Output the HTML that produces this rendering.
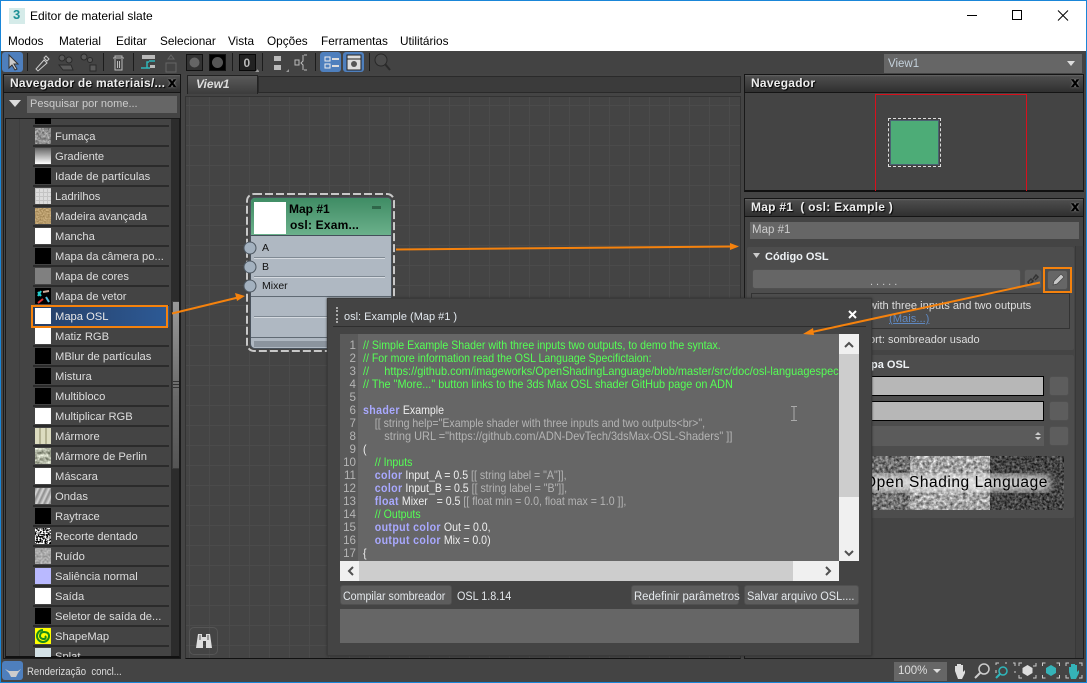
<!DOCTYPE html>
<html><head><meta charset="utf-8"><style>
*{box-sizing:border-box}
html,body{margin:0;padding:0;width:1087px;height:683px;overflow:hidden;background:#444}
body{position:relative;font-family:"Liberation Sans",sans-serif;font-size:12px;color:#ddd}
.a,.t,.r,.s{position:absolute}
.t{white-space:pre;line-height:14px}
.m{top:34px;color:#000;font-size:11.8px}
.r{left:33px;width:136px;height:21px;border-bottom:2px solid #2b2b2b}
.r b{position:absolute;left:22px;top:4px;font-weight:400;white-space:pre;font-size:11.2px;line-height:15px;color:#ddd}
.s{left:2px;top:2px;width:16px;height:16px;background:#fff;overflow:hidden}
.s svg{display:block}
.k{background:#000}
.hd{position:absolute;background:linear-gradient(#666 0,#4c4c4c 10%,#303030 100%);border:1px solid #151515}
.hd b{position:absolute;left:6px;top:1px;font-size:12px;line-height:15px;letter-spacing:.25px;white-space:pre;color:#eee;text-shadow:1px 1px 1px #000}
.hd i{position:absolute;right:4px;top:0;font:bold 14px/15px "Liberation Sans",sans-serif;color:#000;-webkit-text-stroke:.6px #000;text-shadow:0 0 2px #ddd}
.btn{position:absolute;background:#5d5d5d;border-radius:3px;border:1px solid #505050}
.code{position:absolute;left:363px;white-space:pre;font-size:11.6px;line-height:13px;color:#eee;transform:scaleX(.913);transform-origin:0 0}
.c{color:#55ff55}.w{color:#a9a9ff;font-weight:700;letter-spacing:.4px}.g{color:#b4b4b4}
.n{position:absolute;left:340px;width:16px;text-align:right;font-size:11.6px;line-height:13px;color:#b5b5b5}
.bt{font-size:11.5px;color:#e4e8ec;transform-origin:0 0}
</style></head><body>
<svg width="0" height="0" style="position:absolute"><defs>
<filter id="fBW" x="0" y="0" width="100%" height="100%" color-interpolation-filters="sRGB"><feTurbulence type="fractalNoise" baseFrequency=".6" numOctaves="1" seed="3"/><feColorMatrix values="9 0 0 0 -4 9 0 0 0 -4 9 0 0 0 -4 0 0 0 0 1"/></filter>
<filter id="fG" x="0" y="0" width="100%" height="100%" color-interpolation-filters="sRGB"><feTurbulence type="fractalNoise" baseFrequency=".4" numOctaves="2" seed="7"/><feColorMatrix values=".8 0 0 0 .17 .8 0 0 0 .17 .8 0 0 0 .17 0 0 0 0 1"/></filter>
<filter id="fR" x="0" y="0" width="100%" height="100%" color-interpolation-filters="sRGB"><feTurbulence type="fractalNoise" baseFrequency=".5" numOctaves="2" seed="9"/><feColorMatrix values=".4 0 0 0 .46 .4 0 0 0 .46 .4 0 0 0 .46 0 0 0 0 1"/></filter>
<filter id="fS" x="0" y="0" width="100%" height="100%" color-interpolation-filters="sRGB"><feTurbulence type="fractalNoise" baseFrequency=".6" numOctaves="2" seed="2"/><feColorMatrix values=".4 0 0 0 .52 .4 0 0 0 .41 .4 0 0 0 .22 0 0 0 0 1"/></filter>
<filter id="fP" x="0" y="0" width="100%" height="100%" color-interpolation-filters="sRGB"><feTurbulence type="fractalNoise" baseFrequency=".3" numOctaves="2" seed="5"/><feColorMatrix values=".9 0 0 0 .25 .9 0 0 0 .27 .9 0 0 0 .2 0 0 0 0 1"/></filter>
<filter id="fL" x="0" y="0" width="100%" height="100%" color-interpolation-filters="sRGB"><feTurbulence type="fractalNoise" baseFrequency=".35" numOctaves="3" seed="4"/><feColorMatrix values=".9 0 0 0 0 .9 0 0 0 0 .9 0 0 0 0 0 0 0 0 1"/></filter>
<filter id="fM" x="0" y="0" width="100%" height="100%" color-interpolation-filters="sRGB"><feTurbulence type="fractalNoise" baseFrequency=".3" numOctaves="3" seed="8"/><feColorMatrix values="1 0 0 0 .15 1 0 0 0 .15 1 0 0 0 .15 0 0 0 0 1"/></filter>
<filter id="fD" x="0" y="0" width="100%" height="100%" color-interpolation-filters="sRGB"><feTurbulence type="fractalNoise" baseFrequency=".4" numOctaves="3" seed="6"/><feColorMatrix values=".7 0 0 0 -.08 .7 0 0 0 -.08 .7 0 0 0 -.08 0 0 0 0 1"/></filter>
<filter id="fB"><feGaussianBlur stdDeviation="4"/></filter>
</defs></svg>
<!-- title bar -->
<div class="a" style="left:0;top:0;width:1087px;height:51px;background:#fff"></div>
<div class="a" style="left:9px;top:8px;width:16px;height:16px;background:#d5ebe9"></div>
<div class="t" style="left:13px;top:8px;color:#1c8f95;font-weight:700;font-size:13px">3</div>
<div class="t" style="left:30px;top:9px;color:#000;font-size:12px">Editor de material slate</div>
<div class="t m" style="left:8px">Modos</div><div class="t m" style="left:59px">Material</div><div class="t m" style="left:116px">Editar</div><div class="t m" style="left:160px">Selecionar</div><div class="t m" style="left:228px">Vista</div><div class="t m" style="left:267px">Opções</div><div class="t m" style="left:321px">Ferramentas</div><div class="t m" style="left:400px">Utilitários</div>
<svg class="a" style="left:960px;top:5px" width="120" height="22" fill="none" stroke="#000"><path d="M7 10.500h10" stroke-width="1"/><rect x="52.500" y="5.500" width="9" height="9"/><path d="M98 5.500l10 10M108 5.500l-10 10" stroke-width="1"/></svg>

<!-- toolbar -->
<div class="a" style="left:1px;top:51px;width:1085px;height:23px;background:#434343"></div>
<div class="a" style="left:2px;top:52px;width:21px;height:20px;background:#4e7fbd;border-radius:3px"></div>
<div class="a" style="left:320px;top:52px;width:21px;height:20px;background:#4e7fbd;border-radius:3px"></div>
<div class="a" style="left:343px;top:52px;width:21px;height:20px;background:#4e7fbd;border-radius:3px"></div>
<svg class="a" style="left:0;top:51px" width="400" height="23" fill="none">
<path d="M9 4l0 13 3-3 3 5 2-1-3-5h4z" fill="#ccc" stroke="#333"/>
<g stroke="#1c1c1c"><path d="M27.500 2v18M103.500 2v18M133.500 2v18M232.500 2v18M262.500 2v18M315.500 2v18M369.500 2v18"/></g>
<path d="M36 18l8-9 3 3-9 8zM44 7l2-2 3 3-2 2z" stroke="#ccc" fill="none"/>
<g fill="#5a5a5a" stroke="#2a2a2a"><circle cx="62" cy="7" r="3"/><circle cx="69" cy="9" r="3"/><path d="M59 14h12l2 5H63z"/><circle cx="84" cy="6" r="3"/><circle cx="90" cy="9" r="2.500"/><path d="M90 14h6v6h-6z"/></g>
<path d="M113 7h11M115 7V5h7v2M115 8v11h7V8M117.500 10v7M119.500 10v7" stroke="#bbb"/>
<path d="M142 4h13v4h-13zM150 14h5v3h-5z" fill="#bbb"/><path d="M141 17h9M149 11h-2v6M155 10h-6" stroke="#2fb6ba" stroke-width="1.500"/>
<path d="M166 12h10v9h-10zM171 4l3 4h-6z" stroke="#666"/>
<rect x="186.500" y="3.500" width="16" height="16" fill="#333" stroke="#111"/><circle cx="194.500" cy="11.500" r="5" fill="#666"/>
<rect x="209.500" y="3.500" width="16" height="16" fill="#000" stroke="#111"/><circle cx="217.500" cy="11.500" r="5.500" fill="#555"/>
<rect x="239.500" y="3.500" width="16" height="16" fill="#222" stroke="#080808"/><text x="243.500" y="16" font-family="Liberation Sans" font-weight="700" font-size="12" fill="#bbb">0</text>
<path d="M255 21l3-3v3zM286 21l3-3v3zM257 21l2-2v2z" fill="#999"/>
<path d="M274 5h7v5h-7zM274 14h7v5h-7z" fill="#bbb"/><path d="M295 9h4v5h-4zM304 4h3M304 19h3M303 4v6l-2 2 2 2v5" stroke="#bbb" fill="none"/>
<path d="M325 6h5v4h-5zM325 13h5v4h-5z" stroke="#eee"/><path d="M332 7h7v2h-7zM332 14h7v2h-7z" fill="#ddd"/>
<rect x="347" y="4" width="14" height="15" fill="#ddd" stroke="#222"/><path d="M347 8h14" stroke="#222"/><circle cx="354" cy="13" r="3" fill="#555"/>
<circle cx="381" cy="9" r="6" fill="#4c4c4c" stroke="#282828"/><path d="M385 13l5 6" stroke="#2a2a2a" stroke-width="2"/>
</svg>
<div class="a" style="left:884px;top:54px;width:198px;height:19px;background:#666"></div>
<div class="t" style="left:888px;top:57px;color:#c5d2dc;font-size:11.500px">View1</div>
<svg class="a" style="left:1066px;top:60px" width="12" height="8"><path d="M1 1h8L5 6z" fill="#ddd"/></svg>

<!-- graph view -->
<div class="a" style="left:187px;top:75px;width:71px;height:19px;background:linear-gradient(#5a5a5a,#3c3c3c);border:1px solid #222;border-bottom:0"></div>
<div class="t" style="left:196px;top:77px;font-weight:700;font-style:italic;color:#ddd">View1</div>
<div class="a" style="left:258px;top:76px;width:483px;height:17px;background:#3b3b3b;border:1px solid #2a2a2a"></div>
<div class="a" style="left:185px;top:96px;width:556px;height:563px;background-color:#444;background-image:linear-gradient(#4b4b4b 1px,transparent 1px),linear-gradient(90deg,#4b4b4b 1px,transparent 1px);background-size:20px 20px;background-position:3px 8px;border:1px solid #333;border-bottom-color:#111"></div>
<div class="a" style="left:189px;top:627px;width:29px;height:28px;border:1px solid #555;border-radius:5px"></div>
<svg class="a" style="left:195px;top:632px" width="18" height="18"><path d="M3 2h4v3h4V2h4l2 14h-6V9H8v7H1z" fill="#ddd"/><path d="M5 3v5M13 3v5" stroke="#555"/></svg>

<!-- left panel -->
<div class="a" style="left:3px;top:74px;width:178px;height:585px;background:#444;border:1px solid #1a1a1a"></div>
<div class="hd" style="left:3px;top:74px;width:178px;height:19px"><b>Navegador de materiais/...</b><i>x</i></div>
<svg class="a" style="left:9px;top:100px" width="13" height="8"><path d="M0 0h12L6 7z" fill="#ddd"/></svg>
<div class="a" style="left:27px;top:96px;width:150px;height:17px;background:#666"></div>
<div class="t" style="left:30px;top:97px;color:#ccc;font-size:11px">Pesquisar por nome...</div>
<div class="a" style="left:5px;top:118px;width:175px;height:540px;background:#444;border:1px solid #1a1a1a;border-bottom:2px solid #111;overflow:hidden">
 <div class="a" style="left:13px;top:0;width:1px;height:540px;background:#3d3d3d"></div>
 <div class="a" style="left:165px;top:0;width:9px;height:540px;background:#2c2c2c"></div>
 <div class="a" style="left:166px;top:182px;width:8px;height:168px;background:linear-gradient(#999,#666 60%,#555);border:1px solid #3a3a3a"></div>
 <div class="a" style="left:167px;top:262px;width:6px;height:1px;background:#333;box-shadow:0 3px #333,0 6px #333"></div>
</div>
<div id="list" class="a" style="left:0;top:118px;width:171px;height:539px;overflow:hidden">
 <div class="r" style="top:-12px"><span class="s k"></span></div>
 <div class="r" style="top:8px"><span class="s"><svg width="16" height="16"><rect width="16" height="16" filter="url(#fG)"/></svg></span><b>Fumaça</b></div>
 <div class="r" style="top:28px"><span class="s" style="background:linear-gradient(#666,#fff)"></span><b>Gradiente</b></div>
 <div class="r" style="top:48px"><span class="s k"></span><b>Idade de partículas</b></div>
 <div class="r" style="top:68px"><span class="s" style="background:linear-gradient(#c4c4c4 1px,transparent 1px) 0 0/4px 4px,linear-gradient(90deg,#c4c4c4 1px,transparent 1px) 0 0/4px 4px,#dcdcdc"></span><b>Ladrilhos</b></div>
 <div class="r" style="top:88px"><span class="s"><svg width="16" height="16"><rect width="16" height="16" filter="url(#fS)"/></svg></span><b>Madeira avançada</b></div>
 <div class="r" style="top:108px"><span class="s"></span><b>Mancha</b></div>
 <div class="r" style="top:128px"><span class="s k"></span><b>Mapa da câmera po...</b></div>
 <div class="r" style="top:148px"><span class="s" style="background:#808080"></span><b>Mapa de cores</b></div>
 <div class="r" style="top:168px"><span class="s k"><svg width="16" height="16"><path d="M3 8l3-5M3 4l3 4" stroke="#2cc" stroke-width="2"/><path d="M8 4l6-1" stroke="#ca9" stroke-width="2"/><path d="M3 15l5-4" stroke="#d33" stroke-width="2"/><path d="M11 9l3 5" stroke="#5bd" stroke-width="2"/></svg></span><b>Mapa de vetor</b></div>
 <div class="r" style="top:188px;background:linear-gradient(90deg,#263f66,#2d5a96);border-bottom:0"><span class="s"></span><b style="color:#e8e8e8">Mapa OSL</b></div>
 <div class="r" style="top:208px"><span class="s"></span><b>Matiz RGB</b></div>
 <div class="r" style="top:228px"><span class="s k"></span><b>MBlur de partículas</b></div>
 <div class="r" style="top:248px"><span class="s k"></span><b>Mistura</b></div>
 <div class="r" style="top:268px"><span class="s k"></span><b>Multibloco</b></div>
 <div class="r" style="top:288px"><span class="s"></span><b>Multiplicar RGB</b></div>
 <div class="r" style="top:308px"><span class="s" style="background:repeating-linear-gradient(90deg,#dcdcc0 0 4px,#b3b292 4px 6px)"></span><b>Mármore</b></div>
 <div class="r" style="top:328px"><span class="s"><svg width="16" height="16"><rect width="16" height="16" filter="url(#fP)"/></svg></span><b>Mármore de Perlin</b></div>
 <div class="r" style="top:348px"><span class="s"></span><b>Máscara</b></div>
 <div class="r" style="top:368px"><span class="s" style="background:repeating-linear-gradient(115deg,#8a8a8a 0,#d8d8d8 3px,#8a8a8a 5px)"></span><b>Ondas</b></div>
 <div class="r" style="top:388px"><span class="s k"></span><b>Raytrace</b></div>
 <div class="r" style="top:408px"><span class="s"><svg width="16" height="16"><rect width="16" height="16" filter="url(#fBW)"/></svg></span><b>Recorte dentado</b></div>
 <div class="r" style="top:428px"><span class="s"><svg width="16" height="16"><rect width="16" height="16" filter="url(#fR)"/></svg></span><b>Ruído</b></div>
 <div class="r" style="top:448px"><span class="s" style="background:#b9b9ff"></span><b>Saliência normal</b></div>
 <div class="r" style="top:468px"><span class="s"></span><b>Saída</b></div>
 <div class="r" style="top:488px"><span class="s k"></span><b>Seletor de saída de...</b></div>
 <div class="r" style="top:508px"><span class="s" style="background:#ff0"><svg width="16" height="16"><path d="M8 2a6 6 0 1 0 6 6c0-3-2-4-5-4S5 6 5 8s2 3 4 3 2-2 1-3" fill="none" stroke="#1a8a1a" stroke-width="2"/></svg></span><b>ShapeMap</b></div>
 <div class="r" style="top:528px"><span class="s" style="background:#d3e1e6"></span><b>Splat</b></div>
</div>
<div class="a" style="left:31px;top:305px;width:137px;height:23px;border:2px solid #f5820d"></div>

<!-- status -->
<div class="a" style="left:0;top:659px;width:1087px;height:24px;background:#444"></div>
<div class="a" style="left:2px;top:661px;width:21px;height:19px;background:#4e7fbd;border-radius:3px"></div>
<svg class="a" style="left:4px;top:663px" width="18" height="16"><path d="M1 6l4 2h9l3-2-3 4-2 4H7L5 10z" fill="#ccc"/></svg>
<div class="t" style="left:27px;top:665px;font-size:11px;color:#ddd;transform:scaleX(.87);transform-origin:0 0">Renderização  concl...</div>
<div class="a" style="left:894px;top:662px;width:53px;height:19px;background:#666"></div>
<div class="t" style="left:898px;top:664px;color:#ddd;font-size:11.5px">100%</div>
<svg class="a" style="left:931px;top:668px" width="12" height="8"><path d="M2 1h8L6 5z" fill="#ddd"/></svg>
<svg class="a" style="left:950px;top:660px" width="136" height="22" fill="none">
<path d="M5 11V6h2v4V4h2v6V4h2v6V5h2v7l2-2v3l-3 6H8z" fill="#ddd"/>
<circle cx="34" cy="9" r="5" stroke="#ccc" stroke-width="1.500"/><path d="M30 13l-5 5" stroke="#ccc" stroke-width="2"/>
<g transform="translate(-3 0)"><path d="M49 5V3h3M58 3h2M66 3h2v3M68 11v2M49 10v3" stroke="#ccc"/><circle cx="56" cy="11" r="4" stroke="#2fb6ba" stroke-width="1.500"/><path d="M53 14l-4 4" stroke="#2fb6ba" stroke-width="2"/></g>
<g transform="translate(-4 0)"><path d="M73 6V3h3M90 3v3h-3M73 15v3h3M90 15v3h-3" stroke="#ccc"/><path d="M81.500 5l5 3v5l-5 3-5-3V8z" fill="#ddd"/></g>
<g transform="translate(-2.500 0)"><path d="M95 6V3h3M112 6V3h-3M95 15v3h3M112 15v3h-3" stroke="#ccc"/><path d="M103.500 5l5 3v5l-5 3-5-3V8z" fill="#35b3b8"/></g>
<g transform="translate(-2 0)"><path d="M118 6V3h3M134 6V3h-3M118 15v3h3M134 15v3h-3" stroke="#ccc"/><path d="M121 12V7h2v3V4h2v6V4h2v6V5h2v7l2-2v3l-3 6h-5z" fill="#35b3b8"/></g>
</svg>

<!-- navigator -->
<div class="a" style="left:744px;top:74px;width:340px;height:118px;background:#444;border:1px solid #1a1a1a;border-bottom:2px solid #111"></div>
<div class="hd" style="left:744px;top:74px;width:340px;height:19px"><b>Navegador</b><i>x</i></div>
<div class="a" style="left:875px;top:94px;width:152px;height:97px;border:1px solid #d8101c;border-bottom:0"></div>
<div class="a" style="left:888px;top:118px;width:53px;height:49px;border:1px dashed #ddd"></div>
<div class="a" style="left:890px;top:120px;width:49px;height:45px;background:#4dac77;border:1px solid #4a6272"></div>

<!-- map panel -->
<div class="a" style="left:744px;top:198px;width:340px;height:461px;background:#444;border:1px solid #1a1a1a"></div>
<div class="hd" style="left:744px;top:198px;width:340px;height:19px"><b>Map #1  ( osl: Example )</b><i>x</i></div>
<div class="a" style="left:750px;top:222px;width:329px;height:17px;background:#666"></div>
<div class="t" style="left:752px;top:223px;color:#ccc;font-size:11.5px">Map #1</div>
<div class="a" style="left:746px;top:246px;width:329px;height:105px;background:#4d4d4d;border-radius:3px;border:1px solid #444"></div>
<svg class="a" style="left:752px;top:252px" width="10" height="8"><path d="M1 1h7L4.500 6z" fill="#ccc"/></svg>
<div class="t" style="left:765px;top:250px;font-weight:700;color:#eef2f5;font-size:11px">Código OSL</div>
<div class="btn" style="left:752px;top:269px;width:269px;height:20px;background:#666"></div>
<div class="t" style="left:870px;top:275px;color:#ccc;letter-spacing:3px;font-size:11px">.....</div>
<div class="btn" style="left:1024px;top:269px;width:18px;height:20px"></div>
<svg class="a" style="left:1026px;top:272px" width="14" height="14" fill="none" stroke="#333" stroke-width="1.500"><path d="M3 12l-1-2 3-3 2 2-3 3zM7 7l3-4 2 2-3 3"/></svg>
<div class="btn" style="left:1047px;top:270px;width:21px;height:20px;background:#666"></div>
<svg class="a" style="left:1049px;top:271px" width="18" height="18"><path d="M4 14l1-4 7-7 3 3-7 7z" fill="#c8c8c8" stroke="#444" stroke-width=".7"/></svg>
<div class="a" style="left:1043px;top:267px;width:29px;height:26px;border:2px solid #f5820d"></div>
<div class="a" style="left:751px;top:293px;width:319px;height:36px;background:#4d4d4d;border:1px solid #333"></div>
<div class="t" style="left:869px;top:299px;color:#ddd;font-size:11.1px">with three inputs and two outputs</div>
<div class="t" style="left:889px;top:312px;color:#5f88c0;text-decoration:underline;font-size:11.2px">(Mais...)</div>
<div class="t" style="left:869px;top:333px;color:#ddd;font-size:11px">ort: sombreador usado</div>
<div class="a" style="left:746px;top:354px;width:329px;height:165px;background:#4d4d4d;border-radius:3px;border:1px solid #444"></div>
<div class="t" style="left:871px;top:358px;font-weight:700;color:#eef2f5;font-size:11px">pa OSL</div>
<div class="a" style="left:860px;top:376px;width:184px;height:20px;background:#b7b7b7;border:1px solid #000"></div>
<div class="a" style="left:860px;top:401px;width:184px;height:20px;background:#b7b7b7;border:1px solid #000"></div>
<div class="a" style="left:860px;top:426px;width:184px;height:20px;background:#5b5b5b"></div>
<svg class="a" style="left:1034px;top:431px" width="10" height="11"><path d="M1 4l3-3 3 3zM1 6h6L4 9z" fill="#ccc"/></svg>
<div class="btn" style="left:1049px;top:376px;width:20px;height:20px"></div>
<div class="btn" style="left:1049px;top:401px;width:20px;height:20px"></div>
<div class="btn" style="left:1049px;top:426px;width:20px;height:20px"></div>
<svg class="a" style="left:860px;top:456px" width="204" height="54">
<rect width="50" height="54" filter="url(#fL)"/><rect x="50" width="80" height="54" filter="url(#fM)"/><rect x="130" width="74" height="54" filter="url(#fD)"/>
<rect x="4" y="19" width="186" height="16" rx="6" fill="#eee" opacity=".8" filter="url(#fB)"/>
<text x="4" y="31" font-family="Liberation Sans" font-size="15.500" letter-spacing=".55" fill="#000">Open Shading Language</text></svg>
<div class="a" style="left:1075px;top:246px;width:9px;height:412px;background:#404040;border-left:1px solid #383838;border-right:1px solid #1e1e1e"></div>

<!-- node -->
<div class="a" style="left:250px;top:197px;width:142px;height:152px;background:#afb8c2;border:1.500px solid #49525c;border-radius:5px;overflow:hidden">
 <div class="a" style="left:0;top:0;width:140px;height:38px;background:linear-gradient(#3f8c64,#6bb08b);border-bottom:1px solid #444f5a"></div>
 <div class="a" style="left:3px;top:4px;width:32px;height:32px;background:#fff"></div>
 <div class="a" style="left:121px;top:8px;width:9px;height:3px;background:#2f6649"></div>
 <div class="a" style="left:3px;top:59px;width:131px;height:1px;background:#808a94;box-shadow:0 1px #d5dae0"></div>
 <div class="a" style="left:3px;top:78px;width:131px;height:1px;background:#808a94;box-shadow:0 1px #d5dae0"></div>
 <div class="a" style="left:0;top:98px;width:140px;height:1px;background:#606a74"></div>
 <div class="a" style="left:3px;top:118px;width:131px;height:1px;background:#808a94;box-shadow:0 1px #d5dae0"></div>
 <div class="a" style="left:0;top:139px;width:140px;height:1px;background:#606a74"></div>
 <div class="a" style="left:3px;top:143px;width:134px;height:6px;background:#8b949e"></div>
</div>
<svg class="a" style="left:244px;top:191px" width="154" height="164" fill="none"><rect x="3" y="3" width="147" height="157" rx="7" stroke="#c8c8c8" stroke-width="2" stroke-dasharray="8 3"/></svg>
<div class="t" style="left:289px;top:202px;color:#000;font-weight:700;font-size:12px">Map #1</div>
<div class="t" style="left:290px;top:218px;color:#000;font-weight:700;font-size:12px;letter-spacing:.2px">osl: Exam...</div>
<div class="t" style="left:262px;top:241px;color:#111;font-size:10.500px">A</div>
<div class="t" style="left:262px;top:260px;color:#111;font-size:10.500px">B</div>
<div class="t" style="left:262px;top:279px;color:#111;font-size:10.500px">Mixer</div>
<svg class="a" style="left:243px;top:240px" width="16" height="54"><g fill="#a3b1bf" stroke="#4e5862"><circle cx="7" cy="8" r="6"/><circle cx="7" cy="27" r="6"/><circle cx="7" cy="46" r="6"/></g></svg>

<!-- dialog -->
<div class="a" style="left:327px;top:298px;width:545px;height:358px;background:#444;border:1px solid #3a3a3a;box-shadow:0 0 2px #2a2a2a"></div>
<div class="a" style="left:336px;top:307px;width:2px;height:16px;border-left:2px dotted #aaa"></div>
<div class="t" style="left:344px;top:310px;color:#e2e8ee;font-size:11px">osl: Example (Map #1 )</div>
<svg class="a" style="left:848px;top:310px" width="10" height="10"><path d="M1 1l7 7M8 1l-7 7" stroke="#fff" stroke-width="2"/></svg>
<div class="a" style="left:333px;top:326px;width:533px;height:1px;background:#2e2e2e"></div>
<div class="a" style="left:340px;top:334px;width:499px;height:227px;background:#666;overflow:hidden"></div>
<div class="a" style="left:340px;top:334px;width:18px;height:227px;background:#5a5a5a"></div>
<div id="code" class="a" style="left:0;top:339px;width:839px;height:222px;overflow:hidden">
<div class="n" style="top:0">1</div><div class="n" style="top:13px">2</div><div class="n" style="top:26px">3</div><div class="n" style="top:39px">4</div><div class="n" style="top:52px">5</div><div class="n" style="top:65px">6</div><div class="n" style="top:78px">7</div><div class="n" style="top:91px">8</div><div class="n" style="top:104px">9</div><div class="n" style="top:117px">10</div><div class="n" style="top:130px">11</div><div class="n" style="top:143px">12</div><div class="n" style="top:156px">13</div><div class="n" style="top:169px">14</div><div class="n" style="top:182px">15</div><div class="n" style="top:195px">16</div><div class="n" style="top:208px">17</div>
<div class="code c" style="top:0">// Simple Example Shader with three inputs two outputs, to demo the syntax.</div>
<div class="code c" style="top:13px">// For more information read the OSL Language Specifictaion:</div>
<div class="code c" style="top:26px;transform:scaleX(.945)">//     https://github.com/imageworks/OpenShadingLanguage/blob/master/src/doc/osl-languagespec.pdf</div>
<div class="code c" style="top:39px;transform:scaleX(.938)">// The "More..." button links to the 3ds Max OSL shader GitHub page on ADN</div>
<div class="code" style="top:65px"><span class="w">shader</span> Example</div>
<div class="code g" style="top:78px">    [[ string help="Example shader with three inputs and two outputs&lt;br&gt;",</div>
<div class="code g" style="top:91px;transform:scaleX(.945)">       string URL ="https://github.com/ADN-DevTech/3dsMax-OSL-Shaders" ]]</div>
<div class="code" style="top:104px">(</div>
<div class="code c" style="top:117px">    // Inputs</div>
<div class="code" style="top:130px">    <span class="w">color</span> Input_A = 0.5 <span class="g">[[ string label = "A"]],</span></div>
<div class="code" style="top:143px">    <span class="w">color</span> Input_B = 0.5 <span class="g">[[ string label = "B"]],</span></div>
<div class="code" style="top:156px">    <span class="w">float</span> Mixer   = 0.5 <span class="g">[[ float min = 0.0, float max = 1.0 ]],</span></div>
<div class="code c" style="top:169px">    // Outputs</div>
<div class="code" style="top:182px">    <span class="w">output color</span> Out = 0.0,</div>
<div class="code" style="top:195px">    <span class="w">output color</span> Mix = 0.0)</div>
<div class="code" style="top:208px">{</div>
</div>
<div class="a" style="left:839px;top:334px;width:20px;height:227px;background:#f0f0f0"></div>
<div class="a" style="left:839px;top:354px;width:20px;height:143px;background:#cdcdcd"></div>
<svg class="a" style="left:839px;top:334px" width="20" height="227" fill="none" stroke="#505050" stroke-width="2"><path d="M6 13l4-4 4 4M6 217l4 4 4-4"/></svg>
<div class="a" style="left:340px;top:561px;width:499px;height:20px;background:#f0f0f0"></div>
<div class="a" style="left:359px;top:561px;width:434px;height:20px;background:#cdcdcd"></div>
<svg class="a" style="left:340px;top:561px" width="499" height="20" fill="none" stroke="#505050" stroke-width="2"><path d="M13 6l-4 4 4 4M486 6l4 4-4 4"/></svg>
<svg class="a" style="left:789px;top:405px" width="10" height="18" fill="none" stroke="#aaa"><path d="M2 1.500h6M5 1.500v14M2 15.500h6"/></svg>
<div class="btn" style="left:340px;top:585px;width:112px;height:20px"></div>
<div class="t bt" style="left:343px;top:590px;transform:scaleX(.925)">Compilar sombreador</div>
<div class="t bt" style="left:457px;top:590px;transform:scaleX(.94)">OSL 1.8.14</div>
<div class="btn" style="left:631px;top:585px;width:108px;height:20px"></div>
<div class="t bt" style="left:634px;top:590px;transform:scaleX(.985)">Redefinir parâmetros</div>
<div class="btn" style="left:744px;top:585px;width:115px;height:20px"></div>
<div class="t bt" style="left:747px;top:590px;transform:scaleX(.955)">Salvar arquivo OSL....</div>
<div class="a" style="left:340px;top:609px;width:519px;height:34px;background:#666"></div>

<!-- arrows -->
<svg class="a" style="left:0;top:0" width="1087" height="683" fill="none">
<g stroke="#f5820d" stroke-width="2">
<path d="M172 313.500L238 297.500"/><path d="M396 249.500L732 246.500"/><path d="M1040 282.500L812 332"/></g>
<g fill="#f5820d"><path d="M245 296l-10-3 2 8z"/><path d="M739 246.500l-9-3.500v7z"/><path d="M803 334l10-6 1 7z"/></g>
</svg>
<!-- window frame -->
<div class="a" style="left:0;top:0;width:1087px;height:683px;border:1px solid #1a86d8;pointer-events:none"></div>
</body></html>
